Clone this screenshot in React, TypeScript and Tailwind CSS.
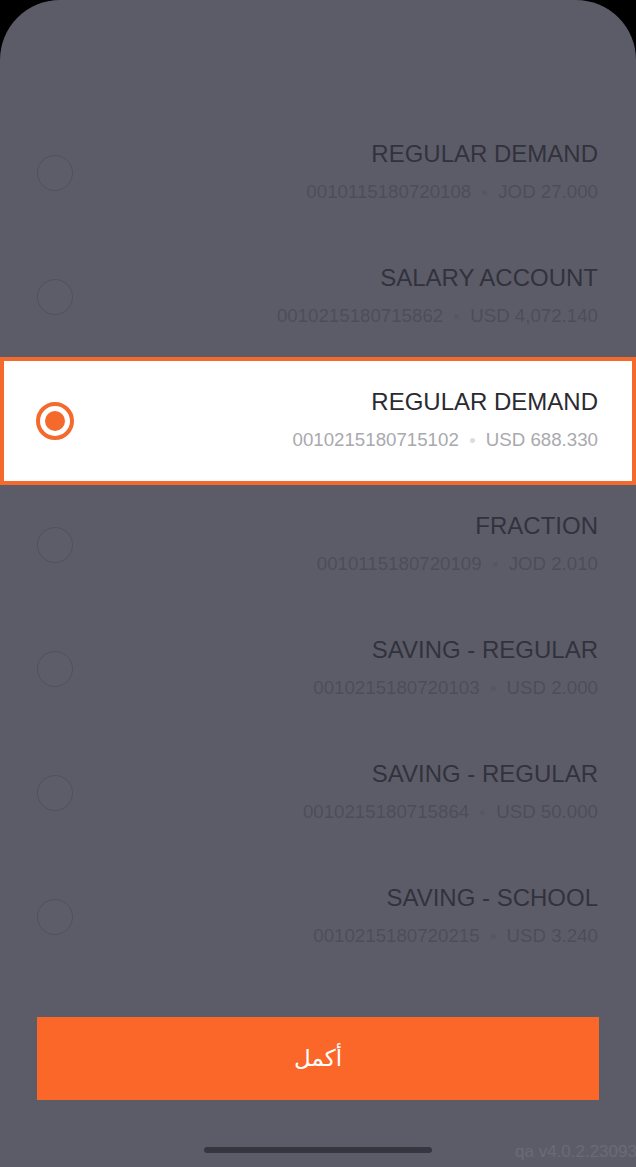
import React from "react";

type Acc = { title: string; num: string; amount: string };

const accounts: Acc[] = [
  { title: "REGULAR DEMAND", num: "0010115180720108", amount: "JOD 27.000" },
  { title: "SALARY ACCOUNT", num: "0010215180715862", amount: "USD 4,072.140" },
  { title: "REGULAR DEMAND", num: "0010215180715102", amount: "USD 688.330" },
  { title: "FRACTION", num: "0010115180720109", amount: "JOD 2.010" },
  { title: "SAVING - REGULAR", num: "0010215180720103", amount: "USD 2.000" },
  { title: "SAVING - REGULAR", num: "0010215180715864", amount: "USD 50.000" },
  { title: "SAVING - SCHOOL", num: "0010215180720215", amount: "USD 3.240" },
];

const font = { fontFamily: '"Liberation Sans", Arial, sans-serif' };

function Row({ acc, selected }: { acc: Acc; selected: boolean }) {
  if (selected) {
    return (
      <div className="relative z-10 -my-[2px] flex h-[128px] items-center border-4 border-[#f4692c] bg-white pl-[32px] pr-[34px]">
        <div className="flex h-[38px] w-[38px] items-center justify-center rounded-full border-4 border-[#f4692c]">
          <div className="h-[20px] w-[20px] rounded-full bg-[#f4692c]" />
        </div>
        <div className="flex flex-1 flex-col items-end pb-[2px]">
          <div className="text-[24px] leading-[28px] text-[#2a2a32]">{acc.title}</div>
          <div className="mt-3 flex items-center text-[18.7px] leading-[24px] text-[#a9a9ae]">
            <span>{acc.num}</span>
            <span className="mx-[11px] h-[5px] w-[5px] rounded-full bg-[#dcdce0]" />
            <span>{acc.amount}</span>
          </div>
        </div>
      </div>
    );
  }
  return (
    <div className="flex h-[124px] items-center pl-[37px] pr-[38px]">
      <div className="h-[36px] w-[36px] rounded-full border border-[#51515c] bg-[#5d5d6a]" />
      <div className="flex flex-1 flex-col items-end pb-[2px]">
        <div className="text-[24px] leading-[28px] text-[#32323c]">{acc.title}</div>
        <div className="mt-3 flex items-center text-[18.7px] leading-[24px] text-[#4d4d59]">
          <span>{acc.num}</span>
          <span className="mx-[11px] h-[5px] w-[5px] rounded-full bg-[#575762]" />
          <span>{acc.amount}</span>
        </div>
      </div>
    </div>
  );
}

export default function App() {
  return (
    <div className="h-[1167px] w-[636px] overflow-hidden bg-black" style={font}>
      <div className="relative flex h-[1167px] flex-col rounded-t-[60px] bg-[#5c5c69]">
        <div className="h-[111px] shrink-0" />
        <div className="flex flex-col">
          {accounts.map((a, i) => (
            <Row key={i} acc={a} selected={i === 2} />
          ))}
        </div>
        <button
          className="mx-[37px] mt-[38px] flex h-[83px] shrink-0 items-center justify-center bg-[#fb6629] text-[23px] text-white"
          style={{ fontFamily: '"DejaVu Sans", "Noto Sans", sans-serif' }}
        >
          أكمل
        </button>
        <div className="mx-auto mt-[47px] h-[6px] w-[228px] rounded-full bg-[#363641]" />
        <div className="absolute bottom-[5px] left-[515px] whitespace-nowrap text-[17px] leading-[20px] text-[#6a6a76]">
          qa v4.0.2.23093
        </div>
      </div>
    </div>
  );
}
